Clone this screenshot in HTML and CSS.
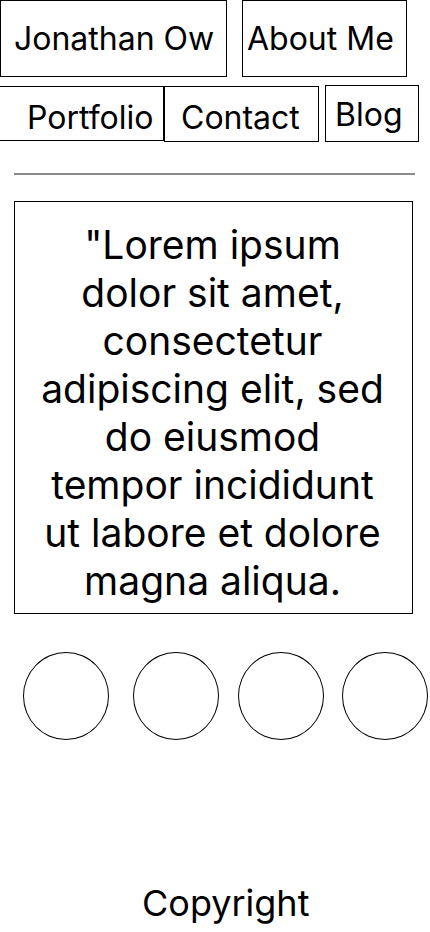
FILE: index.html
```html
<!DOCTYPE html>
<html lang="en">
<head>
<meta charset="utf-8">
<title>Jonathan Ow</title>
<link rel="stylesheet" href="styles.css">
</head>
<body>
<header class="nav">
  <div class="nav-row nav-row-top">
    <a class="nav-item item-name" href="#">Jonathan Ow</a>
    <a class="nav-item item-about" href="#">About Me</a>
  </div>
  <div class="nav-row nav-row-bottom">
    <a class="nav-item item-portfolio" href="#">Portfolio</a>
    <a class="nav-item item-contact" href="#">Contact</a>
    <a class="nav-item item-blog" href="#">Blog</a>
  </div>
</header>
<div class="divider"></div>
<main>
  <blockquote class="quote">"Lorem ipsum dolor sit amet, consectetur adipiscing elit, sed do eiusmod tempor incididunt ut labore et dolore magna aliqua.</blockquote>
  <div class="circles">
    <div class="circle c1"></div>
    <div class="circle c2"></div>
    <div class="circle c3"></div>
    <div class="circle c4"></div>
  </div>
</main>
<footer class="footer">Copyright</footer>
</body>
</html>
```
FILE: styles.css
```css
* { box-sizing: border-box; }
html, body { margin: 0; padding: 0; background: #fff; }
body {
  width: 430px;
  height: 932px;
  overflow: hidden;
  font-family: Inter, "Noto Sans", sans-serif;
  font-size: 32px;
  color: #000;
}
.nav { display: flex; flex-direction: column; }
.nav-row { display: flex; align-items: flex-start; }
.nav-row-top { height: 85px; }
.nav-item {
  display: block;
  color: #000;
  text-decoration: none;
  border: 1px solid #000;
  line-height: 39px;
  white-space: nowrap;
}
.item-name { width: 227px; height: 77px; padding: 18px 0 0 13px; }
.item-about { width: 165px; height: 77px; padding: 18px 0 0 4px; margin-left: 15px; }
.item-portfolio { width: 175px; height: 55px; padding: 11px 0 0 37px; margin-left: -11px; margin-top: 1px; }
.item-contact { width: 155px; height: 56px; padding: 11px 0 0 16px; margin-top: 1px; }
.item-blog { width: 94px; height: 57px; padding: 9px 0 0 9px; margin-left: 6px; }
.divider {
  margin: 31px 15px 0 14px;
  height: 2px;
  background: #8a8a8a;
}
.quote {
  margin: 26px 0 0 14px;
  width: 399px;
  height: 413px;
  border: 1px solid #000;
  padding: 19px 26px 0 24px;
  text-align: center;
  font-size: 39px;
  line-height: 48px;
}
.circles { display: flex; margin-top: 38px; padding-left: 23px; }
.circle {
  width: 86px;
  height: 88px;
  border: 1px solid #000;
  border-radius: 50%;
  flex: none;
}
.c2 { margin-left: 24px; }
.c3 { margin-left: 19px; }
.c4 { margin-left: 18px; }
.footer {
  margin-top: 141px;
  padding-left: 142px;
  font-size: 36px;
  line-height: 44px;
}
```
